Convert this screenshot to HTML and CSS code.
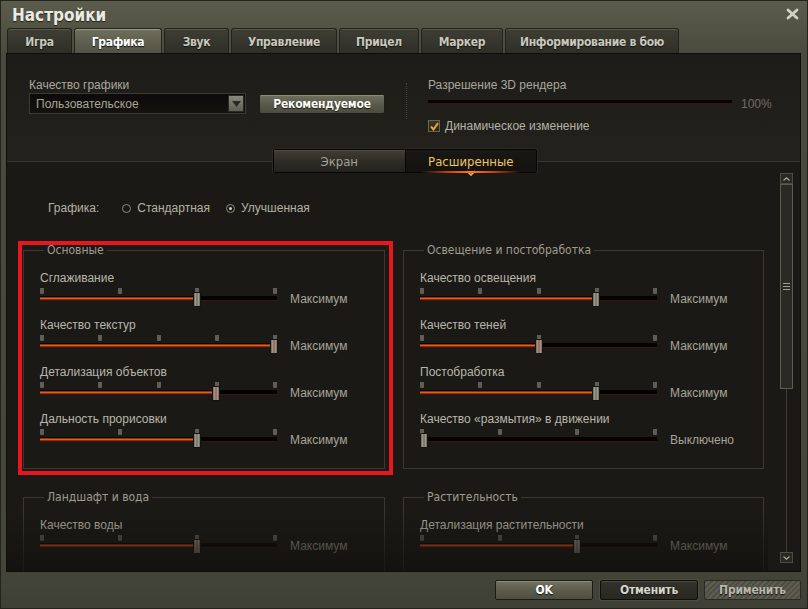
FILE: index.html
```html
<!DOCTYPE html>
<html lang="ru">
<head>
<meta charset="utf-8">
<title>Настройки</title>
<link rel="stylesheet" href="styles.css">
</head>
<body>
<div class="window">
  <div class="titlebar">
    <span class="title">Настройки</span>
    <svg class="close" width="13" height="12" viewBox="0 0 13 12"><path d="M2 2 L11 10 M11 2 L2 10" stroke="#d2d2c8" stroke-width="2.8" stroke-linecap="round"/></svg>
  </div>
  <div class="tabs">
    <div class="tab t1">Игра</div>
    <div class="tab t2 active">Графика</div>
    <div class="tab t3">Звук</div>
    <div class="tab t4">Управление</div>
    <div class="tab t5">Прицел</div>
    <div class="tab t6">Маркер</div>
    <div class="tab t7">Информирование в бою</div>
  </div>
  <div class="panel">
    <div class="header">
      <div class="quality">
        <div class="hlabel">Качество графики</div>
        <div class="qrow">
          <div class="select">
            <span class="select-text">Пользовательское</span>
            <span class="select-btn"><svg width="9" height="6" viewBox="0 0 9 6"><path d="M0 0 H9 L4.5 6 Z" fill="#2a2a24"/></svg></span>
          </div>
          <div class="btn-rec">Рекомендуемое</div>
        </div>
      </div>
      <div class="sep"></div>
      <div class="render">
        <div class="hlabel">Разрешение 3D рендера</div>
        <div class="rrow"><div class="rtrack"></div><span class="pct">100%</span></div>
        <div class="check">
          <span class="cbox"><svg width="9" height="9" viewBox="0 0 9 9"><path d="M1 4.5 L3.5 7.5 L8 1.2" fill="none" stroke="#e8a43a" stroke-width="2"/></svg></span>
          <span class="ctext">Динамическое изменение</span>
        </div>
      </div>
    </div>
    <div class="subtabs-row">
      <div class="subtabs">
        <div class="subtab">Экран</div>
        <div class="subtab active">Расширенные
          <svg class="chev" width="10" height="6" viewBox="0 0 10 6"><path d="M1 1 L5 5 L9 1" fill="none" stroke="#ffb347" stroke-width="1.6"/></svg>
        </div>
      </div>
    </div>
    <div class="scroll">
      <div class="scroll-content">
        <div class="mode">
          <span class="mode-label">Графика:</span>
          <span class="radio"></span><span class="opt">Стандартная</span>
          <span class="radio on"></span><span class="opt">Улучшенная</span>
        </div>
        <div class="groups">
          <div class="group">
            <div class="gtitle">Основные</div>
            <div class="srow">
              <div class="slabel">Сглаживание</div>
              <div class="sline">
                <div class="slider">
                  <div class="ticks"><i></i><i></i><i></i><i></i></div>
                  <div class="track"><div class="fill" style="width:156px"></div></div>
                  <div class="thumb" style="left:153px"></div>
                </div>
                <span class="svalue">Максимум</span>
              </div>
            </div>
            <div class="srow">
              <div class="slabel">Качество текстур</div>
              <div class="sline">
                <div class="slider">
                  <div class="ticks"><i></i><i></i><i></i><i></i><i></i></div>
                  <div class="track"><div class="fill" style="width:233px"></div></div>
                  <div class="thumb red" style="left:230px"></div>
                </div>
                <span class="svalue">Максимум</span>
              </div>
            </div>
            <div class="srow">
              <div class="slabel">Детализация объектов</div>
              <div class="sline">
                <div class="slider">
                  <div class="ticks"><i></i><i></i><i></i><i></i><i></i></div>
                  <div class="track"><div class="fill" style="width:175px"></div></div>
                  <div class="thumb red" style="left:172px"></div>
                </div>
                <span class="svalue">Максимум</span>
              </div>
            </div>
            <div class="srow">
              <div class="slabel">Дальность прорисовки</div>
              <div class="sline">
                <div class="slider">
                  <div class="ticks"><i></i><i></i><i></i><i></i></div>
                  <div class="track"><div class="fill" style="width:156px"></div></div>
                  <div class="thumb" style="left:153px"></div>
                </div>
                <span class="svalue">Максимум</span>
              </div>
            </div>
          </div>
          <div class="group">
            <div class="gtitle">Освещение и постобработка</div>
            <div class="srow">
              <div class="slabel">Качество освещения</div>
              <div class="sline">
                <div class="slider">
                  <div class="ticks"><i></i><i></i><i></i><i></i><i></i></div>
                  <div class="track"><div class="fill" style="width:175px"></div></div>
                  <div class="thumb" style="left:172px"></div>
                </div>
                <span class="svalue">Максимум</span>
              </div>
            </div>
            <div class="srow">
              <div class="slabel">Качество теней</div>
              <div class="sline">
                <div class="slider">
                  <div class="ticks"><i></i><i></i><i></i></div>
                  <div class="track"><div class="fill" style="width:118px"></div></div>
                  <div class="thumb red" style="left:115px"></div>
                </div>
                <span class="svalue">Максимум</span>
              </div>
            </div>
            <div class="srow">
              <div class="slabel">Постобработка</div>
              <div class="sline">
                <div class="slider">
                  <div class="ticks"><i></i><i></i><i></i><i></i><i></i></div>
                  <div class="track"><div class="fill" style="width:175px"></div></div>
                  <div class="thumb" style="left:172px"></div>
                </div>
                <span class="svalue">Максимум</span>
              </div>
            </div>
            <div class="srow">
              <div class="slabel">Качество «размытия» в движении</div>
              <div class="sline">
                <div class="slider">
                  <div class="ticks"><i></i><i></i><i></i><i></i></div>
                  <div class="track"><div class="fill" style="width:0px"></div></div>
                  <div class="thumb" style="left:0px"></div>
                </div>
                <span class="svalue">Выключено</span>
              </div>
            </div>
          </div>
          <div class="group tall">
            <div class="gtitle">Ландшафт и вода</div>
            <div class="srow">
              <div class="slabel">Качество воды</div>
              <div class="sline">
                <div class="slider">
                  <div class="ticks"><i></i><i></i><i></i><i></i></div>
                  <div class="track"><div class="fill" style="width:156px"></div></div>
                  <div class="thumb red" style="left:153px"></div>
                </div>
                <span class="svalue">Максимум</span>
              </div>
            </div>
          </div>
          <div class="group tall">
            <div class="gtitle">Растительность</div>
            <div class="srow">
              <div class="slabel">Детализация растительности</div>
              <div class="sline">
                <div class="slider">
                  <div class="ticks"><i></i><i></i><i></i><i></i></div>
                  <div class="track"><div class="fill" style="width:156px"></div></div>
                  <div class="thumb" style="left:153px"></div>
                </div>
                <span class="svalue">Максимум</span>
              </div>
            </div>
          </div>
        </div>
        <div class="fade"></div>
        <div class="highlight"></div>
      </div>
      <div class="scrollbar">
        <div class="sb-btn"><svg width="7" height="4" viewBox="0 0 7 4"><path d="M0.5 3.5 L3.5 0.8 L6.5 3.5" fill="none" stroke="#a9a796" stroke-width="1.2"/></svg></div>
        <div class="sb-thumb"><span class="grip"></span></div>
        <div class="sb-track"></div>
        <div class="sb-btn"><svg width="7" height="4" viewBox="0 0 7 4"><path d="M0.5 0.5 L3.5 3.2 L6.5 0.5" fill="none" stroke="#a9a796" stroke-width="1.2"/></svg></div>
      </div>
    </div>
  </div>
  <div class="footer">
    <div class="fbtn ok">OK</div>
    <div class="fbtn cancel">Отменить</div>
    <div class="fbtn apply">Применить</div>
  </div>
</div>
</body>
</html>
```
FILE: styles.css
```css
* { box-sizing: border-box; }
html, body { margin: 0; padding: 0; }
body {
  width: 808px;
  height: 609px;
  overflow: hidden;
  background: #1a1915;
  font-family: "Liberation Sans", Arial, sans-serif;
  font-size: 12px;
  color: #b6b4a8;
}
.window {
  width: 808px;
  height: 609px;
  display: flex;
  flex-direction: column;
  border: 1px solid #24241d;
  background: linear-gradient(180deg, #5b5c4c 0px, #515244 30px, #4a4b3e 55px, #45463a 560px, #3f4035 609px);
}
.titlebar {
  height: 27px;
  display: flex;
  align-items: center;
  justify-content: space-between;
  padding: 0 8px 0 11px;
}
.title {
  font-family: "Liberation Sans Narrow", "DejaVu Sans Condensed", "Roboto Condensed", Roboto, sans-serif;
  font-weight: bold;
  font-size: 17px;
  color: #ecebe2;
  text-shadow: 0 1px 1px #1e1e18;
  margin-top: 1px;
}
.close { margin-top: -2px; }
.tabs {
  height: 25px;
  display: flex;
  gap: 2px;
  padding-left: 6px;
}
.tab {
  height: 25px;
  display: flex;
  align-items: center;
  justify-content: center;
  font-family: "Liberation Sans Narrow", "DejaVu Sans Condensed", "Roboto Condensed", Roboto, sans-serif;
  font-weight: bold;
  font-size: 12px;
  letter-spacing: -0.3px;
  color: #c9c8bb;
  border: 1px solid #22221c;
  border-bottom: none;
  border-radius: 3px 3px 0 0;
  background: linear-gradient(180deg, #3e3e34 0%, #2f2f28 100%);
  box-shadow: inset 0 1px 0 #58584b;
  text-shadow: 0 1px 1px #111;
  padding-top: 2px;
}
.tab.active {
  color: #ffffff;
  background: linear-gradient(180deg, #6e6f5c 0%, #5c5d4d 60%, #535446 100%);
  box-shadow: inset 0 1px 0 #9a9b84;
}
.t1 { width: 65px; }
.t2 { width: 88px; }
.t3 { width: 65px; }
.t4 { width: 106px; }
.t5 { width: 80px; }
.t6 { width: 82px; }
.t7 { width: 174px; }
.panel {
  margin: 0 6px 0 5px;
  height: 519px;
  border: 1px solid #0f0e0b;
  background: #1c1a16;
  display: flex;
  flex-direction: column;
}
.header {
  height: 96px;
  display: flex;
  align-items: flex-start;
  padding: 24px 0 0 22px;
  background: linear-gradient(180deg, #1e1c18 0%, #23211c 100%);
}
.hlabel {
  line-height: 14px;
  height: 14px;
  color: #a9a79b;
  white-space: nowrap;
}
.quality { width: 356px; }
.qrow {
  display: flex;
  align-items: flex-start;
  margin-top: 1px;
}
.select {
  width: 217px;
  height: 21px;
  border: 1px solid #3c3a33;
  background: linear-gradient(180deg, #0c0b09, #141310);
  display: flex;
  align-items: center;
  justify-content: space-between;
  padding-left: 6px;
}
.select-text { color: #a8a69a; }
.select-btn {
  width: 16px;
  height: 17px;
  margin-right: 1px;
  background: linear-gradient(180deg, #8a897c, #5f5e54);
  border: 1px solid #2a2922;
  display: flex;
  align-items: center;
  justify-content: center;
}
.btn-rec {
  margin-left: 13px;
  margin-top: 1px;
  width: 126px;
  height: 20px;
  border: 1px solid #1e1e18;
  border-radius: 2px;
  background: linear-gradient(180deg, #6f705d 0%, #5a5b4c 50%, #4b4c3f 100%);
  box-shadow: inset 0 1px 0 #8a8b75;
  color: #fbfbf4;
  font-family: "Liberation Sans Narrow", "DejaVu Sans Condensed", "Roboto Condensed", Roboto, sans-serif;
  font-weight: bold;
  font-size: 12px;
  letter-spacing: -0.2px;
  display: flex;
  align-items: center;
  justify-content: center;
  text-shadow: 0 1px 1px #151510;
}
.sep {
  width: 1px;
  height: 36px;
  margin: 5px 0 0 21px;
  border-left: 1px dotted #47453c;
}
.render { margin-left: 21px; width: 350px; }
.rrow {
  display: flex;
  align-items: center;
  height: 16px;
  margin-top: 2px;
}
.rtrack {
  width: 304px;
  height: 4px;
  background: #050403;
  border-bottom: 1px solid #3c1510;
}
.pct {
  margin-left: 9px;
  color: #6f6d63;
  margin-top: 3px;
}
.check {
  display: flex;
  align-items: center;
  margin-top: 10px;
  height: 12px;
}
.cbox {
  width: 12px;
  height: 12px;
  border: 1px solid #6a6652;
  background: linear-gradient(180deg, #3a372c, #26241d);
  display: flex;
  align-items: center;
  justify-content: center;
}
.ctext { margin-left: 5px; color: #b4b2a6; }
.subtabs-row {
  height: 24px;
  padding-left: 266px;
  background: linear-gradient(180deg, #23211c 0px, #23211c 12px, #37352d 12px, #37352d 13px, #1b1915 13px);
}
.subtabs {
  width: 264px;
  height: 24px;
  display: flex;
  border: 1px solid #070605;
  border-radius: 2px;
  box-shadow: 0 0 0 1px #2c2a24;
}
.subtab {
  flex: 1;
  display: flex;
  align-items: center;
  justify-content: center;
  font-family: "Liberation Sans Narrow", "DejaVu Sans Condensed", "Roboto Condensed", Roboto, sans-serif;
  font-size: 13px;
  color: #a4a296;
  background: linear-gradient(180deg, #403e36 0%, #2e2c26 50%, #24221d 100%);
  box-shadow: inset 0 1px 0 #4e4c43;
  position: relative;
}
.subtab.active {
  color: #ecc666;
  background: linear-gradient(180deg, #1a1814, #13120f);
  box-shadow: none;
  border-left: 1px solid #050403;
}
.subtab.active::after {
  content: "";
  position: absolute;
  left: 15px;
  right: 15px;
  bottom: -1px;
  height: 2px;
  background: linear-gradient(90deg, rgba(200,60,10,0), #d4480e 30%, #ff7a1a 50%, #d4480e 70%, rgba(200,60,10,0));
}
.chev {
  position: absolute;
  left: 60px;
  bottom: -4px;
}
.scroll {
  height: 398px;
  display: flex;
  background: #1b1915;
}
.scroll-content {
  flex: 1;
  position: relative;
  overflow: hidden;
  padding-top: 28px;
}
.mode {
  display: flex;
  align-items: center;
  height: 14px;
  padding-left: 41px;
  color: #b3b1a5;
}
.mode-label { margin-right: 23px; }
.radio {
  width: 9px;
  height: 9px;
  border-radius: 50%;
  border: 1px solid #8d8b7e;
  background: #1a1813;
  margin-right: 6px;
  position: relative;
}
.radio.on::after {
  content: "";
  position: absolute;
  left: 2px;
  top: 2px;
  width: 3px;
  height: 3px;
  border-radius: 50%;
  background: #d6d4c8;
}
.opt { margin-right: 16px; }
.groups {
  margin-top: 35px;
  padding-left: 16px;
  display: grid;
  grid-template-columns: 362px 361px;
  column-gap: 18px;
  row-gap: 28px;
}
.group {
  border: 1px solid #3a382f;
  padding: 0 0 9px 16px;
}
.group.tall { min-height: 160px; }
.gtitle {
  width: fit-content;
  margin: -7px 0 14px 4px;
  padding: 0 3px;
  height: 13px;
  line-height: 13px;
  background: #1b1915;
  font-family: "Liberation Sans Narrow", "DejaVu Sans Condensed", "Roboto Condensed", Roboto, sans-serif;
  font-size: 12px;
  color: #9e9c90;
}
.srow { height: 47px; }
.slabel {
  height: 14px;
  line-height: 14px;
  color: #b8b6aa;
  white-space: nowrap;
}
.sline {
  display: flex;
  align-items: center;
  margin-top: 2px;
  height: 20px;
}
.slider {
  width: 237px;
  height: 20px;
  position: relative;
}
.ticks {
  position: absolute;
  left: 0;
  top: 1px;
  width: 237px;
  display: flex;
  justify-content: space-between;
}
.ticks i {
  display: block;
  width: 4px;
  height: 6px;
  background: #5f5d55;
  border-radius: 0 0 1px 1px;
}
.track {
  position: absolute;
  left: 0;
  top: 9px;
  width: 237px;
  height: 5px;
  background: #030302;
  border-bottom: 1px solid #3a1410;
}
.fill {
  height: 3px;
  margin-top: 1px;
  background: linear-gradient(180deg, #6a1a08 0%, #e85c16 50%, #5a1406 100%);
}
.thumb {
  position: absolute;
  top: 5px;
  width: 8px;
  height: 15px;
  border: 1px solid #141410;
  border-radius: 1px;
  background: linear-gradient(90deg, #66645a 0%, #b0ae9e 35%, #3e3c34 50%, #b0ae9e 65%, #66645a 100%);
}
.thumb.red {
  background: linear-gradient(90deg, #66645a 0%, #b0ae9e 35%, #8a1a10 50%, #b0ae9e 65%, #66645a 100%);
}
.svalue {
  margin-left: 13px;
  margin-top: 4px;
  color: #a6a498;
  white-space: nowrap;
}
.fade {
  position: absolute;
  left: 0;
  right: 0;
  bottom: 0;
  height: 60px;
  background: linear-gradient(180deg, rgba(22,21,17,0) 0%, rgba(20,19,16,0.55) 55%, rgba(18,17,14,0.8) 100%);
}
.highlight {
  position: absolute;
  left: 11px;
  top: 68px;
  width: 375px;
  height: 234px;
  border: 4px solid #e8161e;
}
.scrollbar {
  width: 13px;
  margin: 0 7px 8px 12px;
  display: flex;
  flex-direction: column;
  align-items: center;
}
.sb-btn {
  width: 13px;
  height: 11px;
  border: 1px solid #4e4c40;
  background: #2a2822;
  display: flex;
  align-items: center;
  justify-content: center;
}
.sb-thumb {
  width: 13px;
  height: 205px;
  border: 1px solid #5e5c4c;
  background: #2b2923;
  display: flex;
  align-items: center;
  justify-content: center;
}
.grip {
  width: 7px;
  height: 7px;
  background: linear-gradient(180deg, #a09e8e 0 1px, transparent 1px 3px, #a09e8e 3px 4px, transparent 4px 6px, #a09e8e 6px 7px);
}
.sb-track {
  flex: 1;
  width: 1px;
  background: #3e3c33;
}
.footer {
  flex: 1;
  display: flex;
  justify-content: flex-end;
  align-items: flex-start;
  padding: 8px 6px 0 0;
}
.fbtn {
  height: 20px;
  display: flex;
  align-items: center;
  justify-content: center;
  font-family: "Liberation Sans Narrow", "DejaVu Sans Condensed", "Roboto Condensed", Roboto, sans-serif;
  font-weight: bold;
  font-size: 12px;
  letter-spacing: -0.2px;
  border-radius: 2px;
  text-shadow: 0 1px 1px #111;
  white-space: nowrap;
}
.ok {
  width: 98px;
  color: #ffffff;
  border: 1px solid #1c1c16;
  background: linear-gradient(180deg, #717260 0%, #5c5d4d 50%, #4d4e41 100%);
  box-shadow: inset 0 1px 0 #8d8e78;
}
.cancel {
  width: 98px;
  margin-left: 7px;
  color: #d6d5c9;
  border: 1px solid #0e0e0b;
  background: linear-gradient(180deg, #34332b 0%, #282720 100%);
  box-shadow: inset 0 1px 0 #4a493e, 0 0 0 1px #4d4d41;
}
.apply {
  width: 97px;
  margin-left: 6px;
  color: #b8b7ab;
  border: 1px solid #2a2a22;
  background: repeating-linear-gradient(135deg, #4e4e44 0px, #4e4e44 2px, #5d5d52 2px, #5d5d52 4px);
}
```
